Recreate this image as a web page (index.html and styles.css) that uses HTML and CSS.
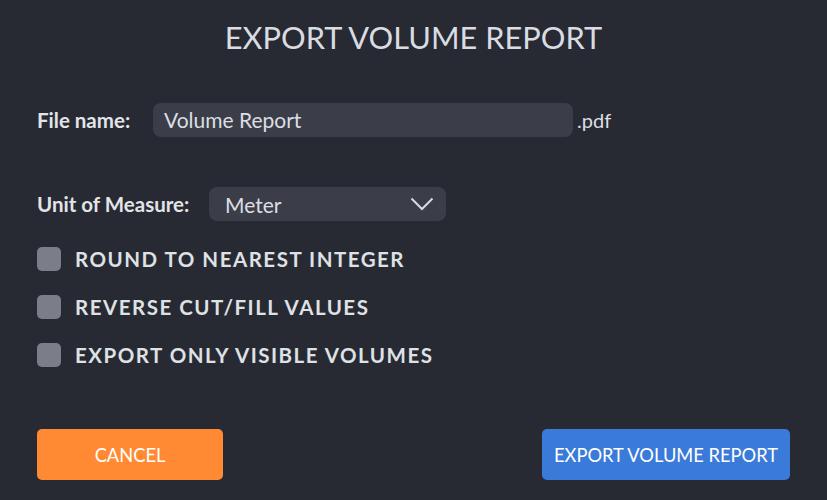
FILE: index.html
```html
<!DOCTYPE html>
<html lang="en">
<head>
    <meta charset="UTF-8">
    <meta name="viewport" content="width=device-width, initial-scale=1.0">
    <title>Export Volume Report</title>
    <link rel="stylesheet" href="styles.css">
</head>
<body>
    <div class="dialog">
        <h1 class="title">EXPORT VOLUME REPORT</h1>

        <div class="row file-row">
            <label class="label" for="fileName">File name:</label>
            <div class="text-field" id="fileName">Volume Report</div>
            <span class="ext">.pdf</span>
        </div>

        <div class="row unit-row">
            <label class="label">Unit of Measure:</label>
            <div class="select">
                <span>Meter</span>
                <svg class="chevron" width="24" height="14" viewBox="0 0 24 14">
                    <path d="M1.5 1.5 L12 12 L22.5 1.5" fill="none" stroke="#d7dae0" stroke-width="2"/>
                </svg>
            </div>
        </div>

        <ul class="options">
            <li><span class="check"></span>ROUND TO NEAREST INTEGER</li>
            <li><span class="check"></span>REVERSE CUT/FILL VALUES</li>
            <li><span class="check"></span>EXPORT ONLY VISIBLE VOLUMES</li>
        </ul>

        <div class="actions">
            <button class="btn btn-cancel">CANCEL</button>
            <button class="btn btn-export">EXPORT VOLUME REPORT</button>
        </div>
    </div>
</body>
</html>
```

FILE: styles.css
```css
html, body {
    margin: 0;
    padding: 0;
    background-color: #272a33;
}

body {
    font-family: Lato, "Open Sans", sans-serif;
    color: #dcdee3;
    width: 827px;
    height: 500px;
    overflow: hidden;
}

.dialog {
    padding: 0 37px;
}

.title {
    margin: 0;
    padding-top: 20px;
    font-size: 30.8px;
    line-height: 36px;
    font-weight: 400;
    text-align: center;
    color: #d9dce1;
}

.row {
    display: flex;
    align-items: center;
}

.label {
    font-size: 20.5px;
    font-weight: 700;
    color: #e2e4e8;
}

.file-row {
    margin-top: 47px;
}

.file-row .label {
    width: 116px;
}

.text-field {
    width: 398px;
    height: 34px;
    padding: 0 11px;
    box-sizing: content-box;
    line-height: 34px;
    font-size: 21px;
    background-color: #3b3e49;
    border-radius: 8px;
    color: #dcdee3;
}

.ext {
    margin-left: 4px;
    font-size: 20px;
    color: #dcdee3;
}

.unit-row {
    margin-top: 50px;
}

.unit-row .label {
    width: 172px;
}

.select {
    width: 237px;
    height: 34px;
    padding: 0 12px 0 16px;
    box-sizing: border-box;
    display: flex;
    align-items: center;
    justify-content: space-between;
    background-color: #3b3e49;
    border-radius: 8px;
    font-size: 21px;
}

.options {
    list-style: none;
    margin: 14px 0 0;
    padding: 0;
}

.options li {
    display: flex;
    align-items: center;
    height: 48px;
    font-size: 20.5px;
    font-weight: 700;
    letter-spacing: 1.5px;
    color: #dfe1e5;
}

.check {
    width: 24px;
    height: 24px;
    border-radius: 5px;
    background-color: #7a7e89;
    margin-right: 14px;
    flex-shrink: 0;
}

.actions {
    display: flex;
    justify-content: space-between;
    margin-top: 50px;
}

.btn {
    height: 51px;
    border: none;
    border-radius: 5px;
    font-family: Lato, sans-serif;
    font-size: 18.3px;
    color: #ffffff;
    cursor: pointer;
}

.btn-cancel {
    width: 186px;
    background-color: #ff8a33;
}

.btn-export {
    width: 248px;
    background-color: #3a7ad9;
}
```
